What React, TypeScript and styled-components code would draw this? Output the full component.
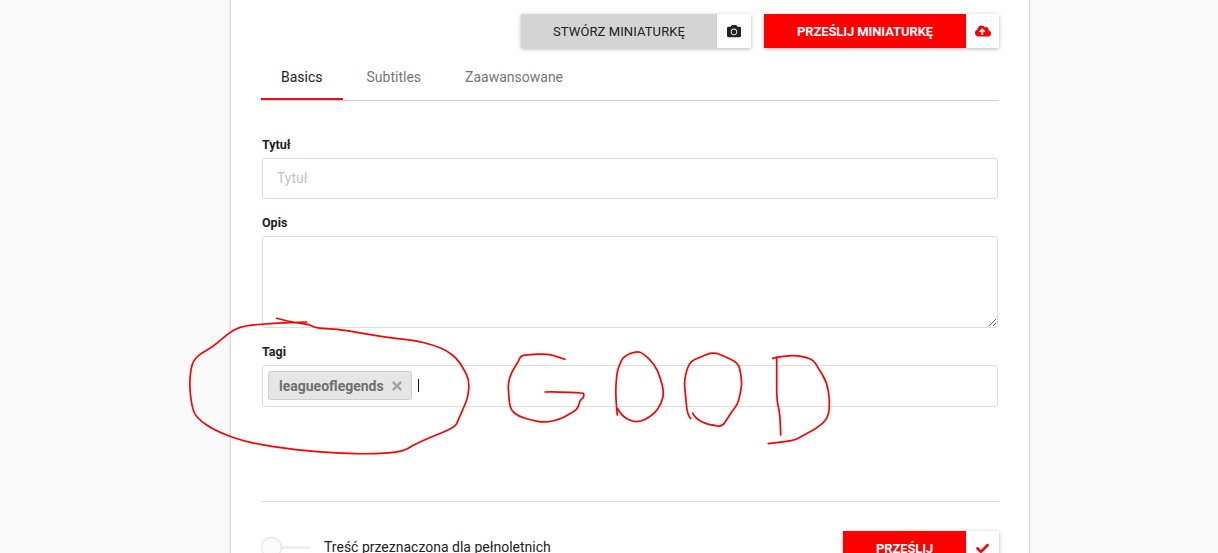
import styled, { createGlobalStyle } from 'styled-components';
import { FaCamera, FaCheck, FaCloudUploadAlt, FaTimes } from 'react-icons/fa';

const GlobalStyle = createGlobalStyle`
  html, body {
    margin: 0;
    height: 553px;
    overflow: hidden;
    background: #fafafa;
    font-family: Roboto, "Liberation Sans", sans-serif;
    color: #212121;
  }
`;

const Page = styled.div`
  position: relative;
  width: 1218px;
  height: 553px;
  overflow: hidden;
`;

const Card = styled.main`
  box-sizing: border-box;
  width: 800px;
  height: 620px;
  margin-left: 230px;
  padding: 14px 30px 0;
  background: #fff;
  border-left: 1px solid #dcdcdc;
  border-right: 1px solid #dcdcdc;
  box-shadow: 0 0 3px rgba(0, 0, 0, 0.12);
`;

const ButtonRow = styled.div`
  display: flex;
  justify-content: flex-end;
  gap: 13px;
`;

const ActionButton = styled.div`
  display: flex;
  height: 34px;
  background: #fff;
  box-shadow: 0 1px 4px rgba(0, 0, 0, 0.28);
`;

const ButtonLabel = styled.span<{ $primary?: boolean; $width: number }>`
  display: flex;
  align-items: center;
  justify-content: center;
  width: ${(p) => p.$width}px;
  font-size: 13px;
  font-weight: ${(p) => (p.$primary ? 700 : 400)};
  letter-spacing: ${(p) => (p.$primary ? -0.1 : 0.1)}px;
  color: ${(p) => (p.$primary ? '#fff' : '#212121')};
  background: ${(p) => (p.$primary ? '#ff0000' : '#d4d4d4')};
`;

const ButtonIcon = styled.span<{ $primary?: boolean }>`
  display: flex;
  align-items: center;
  justify-content: center;
  width: ${(p) => (p.$primary ? 33 : 34)}px;
  font-size: 14px;
  color: ${(p) => (p.$primary ? '#ff0000' : '#212121')};
`;

const Tabs = styled.nav`
  display: flex;
  height: 52px;
  border-bottom: 1px solid #d2d2d2;
`;

const Tab = styled.div<{ $active?: boolean }>`
  box-sizing: border-box;
  height: 52px;
  padding: 20px 20px 0;
  margin-right: 4px;
  font-size: 14px;
  line-height: 18px;
  color: ${(p) => (p.$active ? '#212121' : '#757575')};
  border-bottom: ${(p) => (p.$active ? '2px solid #ee1111' : 'none')};
`;

const Form = styled.form`
  display: flex;
  flex-direction: column;
  padding: 35px 1px 0;
`;

const Field = styled.div`
  display: flex;
  flex-direction: column;
  margin-bottom: 15px;
`;

const Label = styled.label`
  height: 22px;
  font-size: 12.5px;
  font-weight: 700;
  line-height: 18px;
  color: #212121;
`;

const TextInput = styled.input`
  box-sizing: border-box;
  width: 100%;
  height: 41px;
  padding: 0 14px 2px;
  font: 14px Roboto, sans-serif;
  border: 1px solid #dedede;
  border-radius: 3px;
  background: #fff;
  outline: none;

  &::placeholder {
    color: #c4c4c4;
  }
`;

const TextArea = styled.textarea`
  box-sizing: border-box;
  display: block;
  width: 100%;
  height: 92px;
  padding: 10px 14px;
  font: 14px Roboto, sans-serif;
  border: 1px solid #dedede;
  border-radius: 3px;
  background: #fff;
  outline: none;
`;

const TagBox = styled.div`
  box-sizing: border-box;
  display: flex;
  align-items: flex-start;
  height: 42px;
  padding: 5px;
  border: 1px solid #dedede;
  border-radius: 3px;
`;

const Tag = styled.span`
  box-sizing: border-box;
  display: flex;
  align-items: center;
  gap: 6px;
  width: 144px;
  height: 29px;
  padding-left: 10px;
  font-size: 14px;
  font-weight: 700;
  color: #6f6f6f;
  background: #e6e6e6;
  border: 1px solid #cfcfcf;
  border-radius: 3px;
`;

const TagClose = styled.span`
  display: flex;
  font-size: 14px;
  color: #a4a4a4;
`;

const Caret = styled.span`
  width: 1px;
  height: 13px;
  margin: 8px 0 0 6px;
  background: #111;
`;

const Divider = styled.hr`
  width: 738px;
  height: 1px;
  margin: 79px 0 29px -1px;
  border: 0;
  background: #dedede;
`;

const Footer = styled.div`
  display: flex;
  align-items: flex-start;
  justify-content: space-between;
  margin: 0 -1px;
`;

const ToggleRow = styled.div`
  display: flex;
  align-items: center;
  gap: 14px;
  height: 32px;
`;

const Toggle = styled.span`
  position: relative;
  display: block;
  width: 49px;
  height: 3px;
  background: #efefef;
  border-radius: 2px;
`;

const ToggleKnob = styled.span`
  position: absolute;
  left: 0;
  top: -9px;
  box-sizing: border-box;
  width: 21px;
  height: 21px;
  background: #fbfbfb;
  border: 1px solid #dcdcdc;
  border-radius: 50%;
`;

const ToggleText = styled.span`
  font-size: 14px;
  color: #212121;
`;

const Scribble = styled.svg`
  position: absolute;
  left: 0;
  top: 0;
  pointer-events: none;
  fill: none;
  stroke: #ff0000;
  stroke-width: 1.7;
  stroke-linecap: round;
  stroke-linejoin: round;
`;

type Pt = [number, number];

// traced from the zoomed crops, so each stroke carries its crop origin
const toPath = (pts: Pt[], ox: number, oy: number) => {
  const real = pts.map(([x, y]): Pt => [x / 3 + ox, y / 3 + oy]);
  let d = `M${real[0][0].toFixed(1)} ${real[0][1].toFixed(1)}`;
  for (let i = 1; i < real.length - 1; i++) {
    const midX = (real[i][0] + real[i + 1][0]) / 2;
    const midY = (real[i][1] + real[i + 1][1]) / 2;
    d += ` Q${real[i][0].toFixed(1)} ${real[i][1].toFixed(1)} ${midX.toFixed(1)} ${midY.toFixed(1)}`;
  }
  const last = real[real.length - 1];
  return `${d} L${last[0].toFixed(1)} ${last[1].toFixed(1)}`;
};

const circleStroke: Pt[] = [
  [290, 25], [340, 38], [385, 42], [410, 55], [470, 57], [540, 68], [620, 83], [700, 90], [760, 105],
  [800, 122], [830, 145], [850, 175], [868, 210], [865, 260], [850, 295], [835, 330], [825, 352],
  [760, 378], [700, 405], [670, 425], [580, 432], [470, 430], [350, 420], [210, 400], [110, 365],
  [50, 325], [35, 290], [28, 220], [35, 160], [55, 135], [100, 110], [150, 65], [190, 47], [280, 40], [380, 36],
];

const goodStrokes: Pt[][] = [
  [
    [195, 58], [175, 52], [150, 43], [110, 42], [85, 44], [62, 47], [55, 65], [35, 95], [24, 130], [26, 160], [28, 190], [35, 213],
    [55, 228], [90, 240], [135, 248], [180, 238], [205, 224], [232, 208], [238, 190], [240, 180], [252, 172], [251, 160], [250, 159], [170, 155], [135, 156],
  ],
  [
    [352, 225], [346, 170], [350, 100], [360, 70], [372, 48], [410, 33], [430, 40], [465, 75], [480, 110], [492, 155],
    [485, 190], [460, 225], [412, 250], [370, 232], [352, 205],
  ],
  [
    [572, 236], [562, 225], [557, 170], [552, 120], [568, 65], [600, 52], [640, 35], [680, 52], [715, 70], [722, 100], [726, 130],
    [720, 165], [712, 195], [695, 215], [680, 240], [665, 260], [640, 256], [620, 252], [590, 238], [578, 220],
  ],
  [
    [818, 55], [870, 43], [938, 55], [955, 85], [980, 125], [990, 180], [985, 235], [950, 265], [900, 292],
    [880, 302], [805, 311],
  ],
  [[830, 52], [830, 115], [830, 180], [840, 220], [842, 285]],
];

export default function App() {
  return (
    <Page>
      <GlobalStyle />
      <Card>
        <ButtonRow>
          <ActionButton>
            <ButtonLabel $width={196}>STWÓRZ MINIATURKĘ</ButtonLabel>
            <ButtonIcon><FaCamera /></ButtonIcon>
          </ActionButton>
          <ActionButton>
            <ButtonLabel $primary $width={202}>PRZEŚLIJ MINIATURKĘ</ButtonLabel>
            <ButtonIcon $primary><FaCloudUploadAlt size={16} /></ButtonIcon>
          </ActionButton>
        </ButtonRow>
        <Tabs>
          <Tab $active>Basics</Tab>
          <Tab>Subtitles</Tab>
          <Tab>Zaawansowane</Tab>
        </Tabs>
        <Form>
          <Field>
            <Label>Tytuł</Label>
            <TextInput placeholder="Tytuł" />
          </Field>
          <Field>
            <Label>Opis</Label>
            <TextArea />
          </Field>
          <Field>
            <Label>Tagi</Label>
            <TagBox>
              <Tag>
                leagueoflegends
                <TagClose><FaTimes /></TagClose>
              </Tag>
              <Caret />
            </TagBox>
          </Field>
          <Divider />
          <Footer>
            <ToggleRow>
              <Toggle><ToggleKnob /></Toggle>
              <ToggleText>Treść przeznaczona dla pełnoletnich</ToggleText>
            </ToggleRow>
            <ActionButton>
              <ButtonLabel $primary $width={123}>PRZEŚLIJ</ButtonLabel>
              <ButtonIcon $primary><FaCheck size={13} /></ButtonIcon>
            </ActionButton>
          </Footer>
        </Form>
      </Card>
      <Scribble width="1218" height="553" viewBox="0 0 1218 553">
        <path d={toPath(circleStroke, 180, 310)} />
        {goodStrokes.map((s, i) => (
          <path key={i} d={toPath(s, 500, 340)} />
        ))}
      </Scribble>
    </Page>
  );
}
